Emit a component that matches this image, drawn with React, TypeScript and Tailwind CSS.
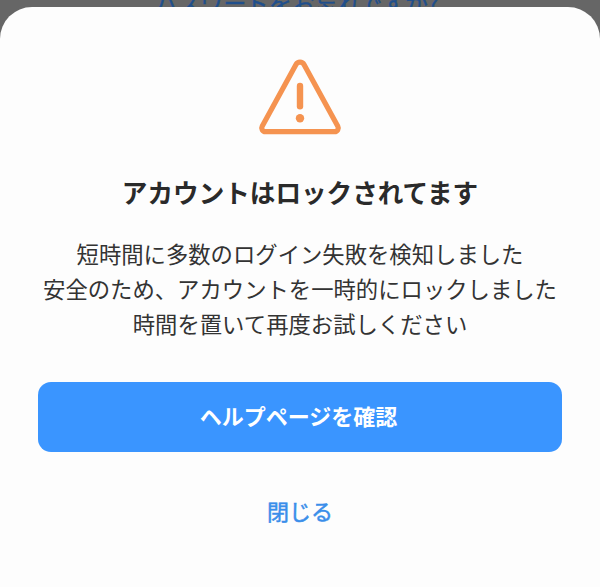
import React from "react";

const messageLines = [
  "短時間に多数のログイン失敗を検知しました",
  "安全のため、アカウントを一時的にロックしました",
  "時間を置いて再度お試しください",
];

const WarningIcon = () => (
  <svg width="84" height="78" viewBox="0 0 84 78" fill="none" className="block" aria-hidden="true">
    <path
      d="M38 6.5 4.2 68.2A3.7 3.7 0 0 0 7.4 73.7H76.6A3.7 3.7 0 0 0 79.8 68.2L46 6.5A4.6 4.6 0 0 0 38 6.5Z"
      stroke="#f59350"
      strokeWidth="5.2"
      strokeLinejoin="round"
    />
    <path d="M42 28V48.2" stroke="#f59350" strokeWidth="6.4" strokeLinecap="round" />
    <circle cx="42" cy="60.3" r="4.2" fill="#f59350" />
  </svg>
);

const App = () => {
  return (
    <div className="relative h-[587px] w-[600px] overflow-hidden bg-[#666666] font-['Noto_Sans_CJK_JP',sans-serif]">
      {/* Login screen behind the sheet */}
      <a className="absolute top-[-13px] left-[155px] text-[22.8px] leading-[32px] whitespace-nowrap text-[#1f4f8c] [-webkit-text-stroke:0.4px_#1f4f8c]">
        パスワードをお忘れですか?
      </a>

      {/* Bottom sheet */}
      <div className="absolute inset-x-0 top-[7px] bottom-0 flex flex-col items-center rounded-t-[32px] bg-[#fdfdfd] px-[38px] pt-[51px]">
        <WarningIcon />
        <h1 className="mt-[37px] text-[25.6px] leading-[38px] font-bold whitespace-nowrap text-[#2a2a2a]">
          アカウントはロックされてます
        </h1>
        <div className="mt-[25px] text-center text-[22.35px] leading-[35px] whitespace-nowrap text-[#333333]">
          {messageLines.map((line) => (
            <p key={line}>{line}</p>
          ))}
        </div>
        <button className="mt-[41px] h-[70px] w-full shrink-0 rounded-[13px] bg-[#3a95ff] pr-[3px] pb-[4px] text-[22px] font-bold text-white">
          ヘルプページを確認
        </button>
        <button className="mt-[41px] text-[22px] leading-[34px] text-[#3a8eea] [-webkit-text-stroke:0.5px_#3a8eea]">
          閉じる
        </button>
      </div>
    </div>
  );
};

export default App;
